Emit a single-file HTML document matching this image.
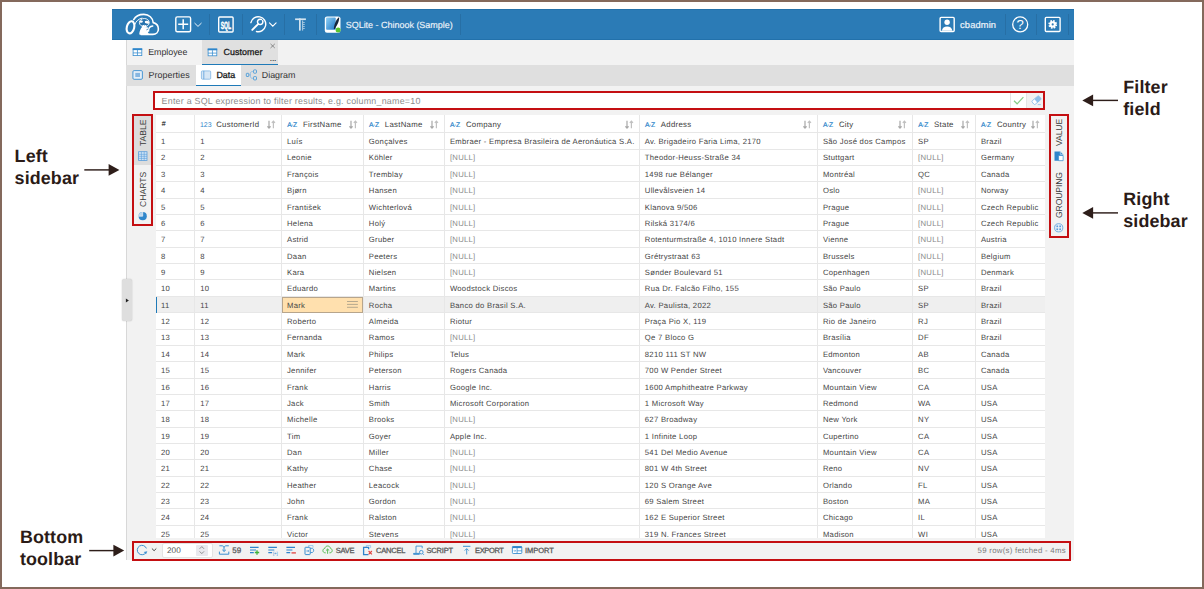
<!DOCTYPE html>
<html><head><meta charset="utf-8"><title>CloudBeaver Data Editor</title>
<style>
html,body{margin:0;padding:0;}
body{width:1204px;height:589px;position:relative;overflow:hidden;background:#fff;font-family:"Liberation Sans",sans-serif;font-size:7.7px;color:#333;text-rendering:geometricPrecision;}
div{box-sizing:border-box;}
svg{position:absolute;left:0;top:0;overflow:visible}
.t{position:absolute;white-space:nowrap;line-height:1;}
.frame{position:absolute;background:#84695c;}
.anno{position:absolute;font-weight:bold;font-size:17.9px;line-height:22px;color:#2b1b17;white-space:nowrap;letter-spacing:.12px}
.cell{position:absolute;white-space:nowrap;line-height:1;color:#454545;font-size:7.7px;letter-spacing:.28px}
.null{color:#888}
.hl{position:absolute;background:#e7e7e7;height:1px}
.vl{position:absolute;background:#e7e7e7;width:1px}
.hd{position:absolute;white-space:nowrap;line-height:1;color:#3c3c3c;font-size:7.8px;letter-spacing:.29px}
.ty{position:absolute;white-space:nowrap;line-height:1;color:#3b8fd0;font-size:7px;letter-spacing:-.2px}
.red{position:absolute;border:2px solid #c40f12;}
.tb{position:absolute;white-space:nowrap;line-height:1;color:#585858;font-size:7.5px;font-weight:normal;letter-spacing:-.18px;-webkit-text-stroke:.28px #585858}
.vt{position:absolute;white-space:nowrap;line-height:1;font-size:8.6px;color:#3a3a3a;transform-origin:0 0;transform:rotate(-90deg) translate(0,-50%)}
.sep{position:absolute;top:13.7px;width:1px;height:21px;background:rgba(0,0,0,.09)}
</style></head><body>

<div style="position:absolute;left:112px;top:8.8px;width:961.9px;height:31px;background:#2b7bb6;border-top:.7px solid #2271ab;border-bottom:.7px solid #2271ab"></div>
<div style="position:absolute;left:126.4px;top:39.8px;width:947.5px;height:520.6px;background:#f2f2f2;border-left:.7px solid #d8d8d8"></div>
<div class="sep" style="left:209.1px"></div>
<div class="sep" style="left:241.7px"></div>
<div class="sep" style="left:284.2px"></div>
<div class="sep" style="left:316.1px"></div>
<div class="sep" style="left:460.0px"></div>
<div class="sep" style="left:1004.6px"></div>
<div class="sep" style="left:1035.9px"></div>
<div class="sep" style="left:1068.0px"></div>
<div style="position:absolute;left:202.2px;top:39.8px;width:75.8px;height:25.3px;background:#e0e0e0;border-bottom:1.5px solid #1f7ab8"></div>
<div style="position:absolute;left:126.4px;top:65.1px;width:947.5px;height:20.9px;background:#dfdfdf"></div>
<div style="position:absolute;left:195.6px;top:65.1px;width:45.3px;height:20.9px;background:#fff;border-bottom:1.5px solid #1f7ab8"></div>
<div class="t" style="left:148.2px;top:47.9px;font-size:8.9px;color:#333;letter-spacing:-.04px">Employee</div>
<div class="t" style="left:223.4px;top:47.9px;font-size:8.9px;color:#1a1a1a;letter-spacing:.1px;-webkit-text-stroke:.3px #1a1a1a">Customer</div>
<div class="t" style="left:148.4px;top:70.5px;font-size:8.9px;color:#333;letter-spacing:.09px">Properties</div>
<div class="t" style="left:216.4px;top:70.5px;font-size:8.9px;color:#1a1a1a;-webkit-text-stroke:.3px #1a1a1a">Data</div>
<div class="t" style="left:261.8px;top:70.5px;font-size:8.9px;color:#333">Diagram</div>
<div class="t" style="left:270.1px;top:56.6px;font-size:6.6px;color:#333;letter-spacing:.25px;font-weight:bold">...</div>
<div style="position:absolute;left:154px;top:91px;width:890px;height:19px;background:#fff"></div>
<div style="position:absolute;left:1026.4px;top:91px;width:18px;height:19px;background:#f1f1f1"></div>
<div style="position:absolute;left:1009.8px;top:92px;width:1px;height:17px;background:#e4e4e4"></div>
<div style="position:absolute;left:1025.9px;top:92px;width:1px;height:17px;background:#e4e4e4"></div>
<div class="t" style="left:161.6px;top:96.7px;font-size:8.9px;color:#8c8c8c;letter-spacing:.236px">Enter a SQL expression to filter results, e.g. column_name=10</div>
<div style="position:absolute;left:155.5px;top:114.6px;width:889.9000000000001px;height:423.6px;background:#fff"></div>
<div style="position:absolute;left:155.5px;top:296.30px;width:889.9000000000001px;height:16.36px;background:#efefef"></div>
<div class="hl" style="left:155.5px;top:132.20px;width:889.9000000000001px"></div>
<div class="hl" style="left:155.5px;top:148.56px;width:889.9000000000001px"></div>
<div class="hl" style="left:155.5px;top:164.92px;width:889.9000000000001px"></div>
<div class="hl" style="left:155.5px;top:181.28px;width:889.9000000000001px"></div>
<div class="hl" style="left:155.5px;top:197.64px;width:889.9000000000001px"></div>
<div class="hl" style="left:155.5px;top:214.00px;width:889.9000000000001px"></div>
<div class="hl" style="left:155.5px;top:230.36px;width:889.9000000000001px"></div>
<div class="hl" style="left:155.5px;top:246.72px;width:889.9000000000001px"></div>
<div class="hl" style="left:155.5px;top:263.08px;width:889.9000000000001px"></div>
<div class="hl" style="left:155.5px;top:279.44px;width:889.9000000000001px"></div>
<div class="hl" style="left:155.5px;top:295.80px;width:889.9000000000001px"></div>
<div class="hl" style="left:155.5px;top:312.16px;width:889.9000000000001px"></div>
<div class="hl" style="left:155.5px;top:328.52px;width:889.9000000000001px"></div>
<div class="hl" style="left:155.5px;top:344.88px;width:889.9000000000001px"></div>
<div class="hl" style="left:155.5px;top:361.24px;width:889.9000000000001px"></div>
<div class="hl" style="left:155.5px;top:377.60px;width:889.9000000000001px"></div>
<div class="hl" style="left:155.5px;top:393.96px;width:889.9000000000001px"></div>
<div class="hl" style="left:155.5px;top:410.32px;width:889.9000000000001px"></div>
<div class="hl" style="left:155.5px;top:426.68px;width:889.9000000000001px"></div>
<div class="hl" style="left:155.5px;top:443.04px;width:889.9000000000001px"></div>
<div class="hl" style="left:155.5px;top:459.40px;width:889.9000000000001px"></div>
<div class="hl" style="left:155.5px;top:475.76px;width:889.9000000000001px"></div>
<div class="hl" style="left:155.5px;top:492.12px;width:889.9000000000001px"></div>
<div class="hl" style="left:155.5px;top:508.48px;width:889.9000000000001px"></div>
<div class="hl" style="left:155.5px;top:524.84px;width:889.9000000000001px"></div>
<div class="vl" style="left:194.20px;top:114.6px;height:423.6px"></div>
<div class="vl" style="left:281.00px;top:114.6px;height:423.6px"></div>
<div class="vl" style="left:362.80px;top:114.6px;height:423.6px"></div>
<div class="vl" style="left:443.90px;top:114.6px;height:423.6px"></div>
<div class="vl" style="left:638.80px;top:114.6px;height:423.6px"></div>
<div class="vl" style="left:816.90px;top:114.6px;height:423.6px"></div>
<div class="vl" style="left:912.10px;top:114.6px;height:423.6px"></div>
<div class="vl" style="left:974.90px;top:114.6px;height:423.6px"></div>
<div style="position:absolute;left:155.9px;top:296.70px;width:1.2px;height:15.959999999999999px;background:#1f7ab8"></div>
<div style="position:absolute;left:281.7px;top:296.70px;width:81.60000000000001px;height:16.16px;background:#ffe0ae;border:1px solid #b7a58c"></div>
<div class="hd" style="left:161.4px;top:120.3px;font-size:7.4px;font-style:italic;font-weight:bold;color:#444">#</div>
<div class="ty" style="left:199.89999999999998px;top:121.49999999999999px;letter-spacing:0;color:#2f86cb">123</div>
<div class="hd" style="left:216.2px;top:120.89999999999999px">CustomerId</div>
<svg style="left:266.9px;top:121.0px" width="9" height="8" viewBox="0 0 9 8"><path d="M2 -0.2v7.1M0.4 5.3l1.6 1.7 1.6-1.7" fill="none" stroke="#a8a8a8" stroke-width="1.2"/><path d="M6.4 7.2V0.2M4.8 1.9l1.6-1.7 1.6 1.7" fill="none" stroke="#c0c0c0" stroke-width="1.2"/></svg>
<div class="ty" style="left:287.2px;top:122.99999999999999px;font-size:6.8px;letter-spacing:-.45px;color:#2f86cb;-webkit-text-stroke:.2px #2f86cb">A·Z</div>
<div class="hd" style="left:303.0px;top:120.89999999999999px">FirstName</div>
<svg style="left:348.7px;top:121.0px" width="9" height="8" viewBox="0 0 9 8"><path d="M2 -0.2v7.1M0.4 5.3l1.6 1.7 1.6-1.7" fill="none" stroke="#a8a8a8" stroke-width="1.2"/><path d="M6.4 7.2V0.2M4.8 1.9l1.6-1.7 1.6 1.7" fill="none" stroke="#c0c0c0" stroke-width="1.2"/></svg>
<div class="ty" style="left:369.0px;top:122.99999999999999px;font-size:6.8px;letter-spacing:-.45px;color:#2f86cb;-webkit-text-stroke:.2px #2f86cb">A·Z</div>
<div class="hd" style="left:384.8px;top:120.89999999999999px">LastName</div>
<svg style="left:429.79999999999995px;top:121.0px" width="9" height="8" viewBox="0 0 9 8"><path d="M2 -0.2v7.1M0.4 5.3l1.6 1.7 1.6-1.7" fill="none" stroke="#a8a8a8" stroke-width="1.2"/><path d="M6.4 7.2V0.2M4.8 1.9l1.6-1.7 1.6 1.7" fill="none" stroke="#c0c0c0" stroke-width="1.2"/></svg>
<div class="ty" style="left:450.09999999999997px;top:122.99999999999999px;font-size:6.8px;letter-spacing:-.45px;color:#2f86cb;-webkit-text-stroke:.2px #2f86cb">A·Z</div>
<div class="hd" style="left:465.9px;top:120.89999999999999px">Company</div>
<svg style="left:624.6999999999999px;top:121.0px" width="9" height="8" viewBox="0 0 9 8"><path d="M2 -0.2v7.1M0.4 5.3l1.6 1.7 1.6-1.7" fill="none" stroke="#a8a8a8" stroke-width="1.2"/><path d="M6.4 7.2V0.2M4.8 1.9l1.6-1.7 1.6 1.7" fill="none" stroke="#c0c0c0" stroke-width="1.2"/></svg>
<div class="ty" style="left:645.0px;top:122.99999999999999px;font-size:6.8px;letter-spacing:-.45px;color:#2f86cb;-webkit-text-stroke:.2px #2f86cb">A·Z</div>
<div class="hd" style="left:660.8px;top:120.89999999999999px">Address</div>
<svg style="left:802.8px;top:121.0px" width="9" height="8" viewBox="0 0 9 8"><path d="M2 -0.2v7.1M0.4 5.3l1.6 1.7 1.6-1.7" fill="none" stroke="#a8a8a8" stroke-width="1.2"/><path d="M6.4 7.2V0.2M4.8 1.9l1.6-1.7 1.6 1.7" fill="none" stroke="#c0c0c0" stroke-width="1.2"/></svg>
<div class="ty" style="left:823.1px;top:122.99999999999999px;font-size:6.8px;letter-spacing:-.45px;color:#2f86cb;-webkit-text-stroke:.2px #2f86cb">A·Z</div>
<div class="hd" style="left:838.9px;top:120.89999999999999px">City</div>
<svg style="left:898.0px;top:121.0px" width="9" height="8" viewBox="0 0 9 8"><path d="M2 -0.2v7.1M0.4 5.3l1.6 1.7 1.6-1.7" fill="none" stroke="#a8a8a8" stroke-width="1.2"/><path d="M6.4 7.2V0.2M4.8 1.9l1.6-1.7 1.6 1.7" fill="none" stroke="#c0c0c0" stroke-width="1.2"/></svg>
<div class="ty" style="left:918.3000000000001px;top:122.99999999999999px;font-size:6.8px;letter-spacing:-.45px;color:#2f86cb;-webkit-text-stroke:.2px #2f86cb">A·Z</div>
<div class="hd" style="left:934.1px;top:120.89999999999999px">State</div>
<svg style="left:960.8px;top:121.0px" width="9" height="8" viewBox="0 0 9 8"><path d="M2 -0.2v7.1M0.4 5.3l1.6 1.7 1.6-1.7" fill="none" stroke="#a8a8a8" stroke-width="1.2"/><path d="M6.4 7.2V0.2M4.8 1.9l1.6-1.7 1.6 1.7" fill="none" stroke="#c0c0c0" stroke-width="1.2"/></svg>
<div class="ty" style="left:981.1px;top:122.99999999999999px;font-size:6.8px;letter-spacing:-.45px;color:#2f86cb;-webkit-text-stroke:.2px #2f86cb">A·Z</div>
<div class="hd" style="left:996.9px;top:120.89999999999999px">Country</div>
<svg style="left:1030.8000000000002px;top:121.0px" width="9" height="8" viewBox="0 0 9 8"><path d="M2 -0.2v7.1M0.4 5.3l1.6 1.7 1.6-1.7" fill="none" stroke="#a8a8a8" stroke-width="1.2"/><path d="M6.4 7.2V0.2M4.8 1.9l1.6-1.7 1.6 1.7" fill="none" stroke="#c0c0c0" stroke-width="1.2"/></svg>
<div class="cell" style="left:161.0px;top:138.10px">1</div>
<div class="cell" style="left:200.2px;top:138.10px">1</div>
<div class="cell" style="left:287.0px;top:138.10px">Luís</div>
<div class="cell" style="left:368.8px;top:138.10px">Gonçalves</div>
<div class="cell" style="left:449.9px;top:138.10px">Embraer - Empresa Brasileira de Aeronáutica S.A.</div>
<div class="cell" style="left:644.8px;top:138.10px">Av. Brigadeiro Faria Lima, 2170</div>
<div class="cell" style="left:822.9px;top:138.10px">São José dos Campos</div>
<div class="cell" style="left:918.1px;top:138.10px">SP</div>
<div class="cell" style="left:980.9px;top:138.10px">Brazil</div>
<div class="cell" style="left:161.0px;top:154.46px">2</div>
<div class="cell" style="left:200.2px;top:154.46px">2</div>
<div class="cell" style="left:287.0px;top:154.46px">Leonie</div>
<div class="cell" style="left:368.8px;top:154.46px">Köhler</div>
<div class="cell null" style="left:449.9px;top:154.46px">[NULL]</div>
<div class="cell" style="left:644.8px;top:154.46px">Theodor-Heuss-Straße 34</div>
<div class="cell" style="left:822.9px;top:154.46px">Stuttgart</div>
<div class="cell null" style="left:918.1px;top:154.46px">[NULL]</div>
<div class="cell" style="left:980.9px;top:154.46px">Germany</div>
<div class="cell" style="left:161.0px;top:170.82px">3</div>
<div class="cell" style="left:200.2px;top:170.82px">3</div>
<div class="cell" style="left:287.0px;top:170.82px">François</div>
<div class="cell" style="left:368.8px;top:170.82px">Tremblay</div>
<div class="cell null" style="left:449.9px;top:170.82px">[NULL]</div>
<div class="cell" style="left:644.8px;top:170.82px">1498 rue Bélanger</div>
<div class="cell" style="left:822.9px;top:170.82px">Montréal</div>
<div class="cell" style="left:918.1px;top:170.82px">QC</div>
<div class="cell" style="left:980.9px;top:170.82px">Canada</div>
<div class="cell" style="left:161.0px;top:187.18px">4</div>
<div class="cell" style="left:200.2px;top:187.18px">4</div>
<div class="cell" style="left:287.0px;top:187.18px">Bjørn</div>
<div class="cell" style="left:368.8px;top:187.18px">Hansen</div>
<div class="cell null" style="left:449.9px;top:187.18px">[NULL]</div>
<div class="cell" style="left:644.8px;top:187.18px">Ullevålsveien 14</div>
<div class="cell" style="left:822.9px;top:187.18px">Oslo</div>
<div class="cell null" style="left:918.1px;top:187.18px">[NULL]</div>
<div class="cell" style="left:980.9px;top:187.18px">Norway</div>
<div class="cell" style="left:161.0px;top:203.54px">5</div>
<div class="cell" style="left:200.2px;top:203.54px">5</div>
<div class="cell" style="left:287.0px;top:203.54px">František</div>
<div class="cell" style="left:368.8px;top:203.54px">Wichterlová</div>
<div class="cell null" style="left:449.9px;top:203.54px">[NULL]</div>
<div class="cell" style="left:644.8px;top:203.54px">Klanova 9/506</div>
<div class="cell" style="left:822.9px;top:203.54px">Prague</div>
<div class="cell null" style="left:918.1px;top:203.54px">[NULL]</div>
<div class="cell" style="left:980.9px;top:203.54px">Czech Republic</div>
<div class="cell" style="left:161.0px;top:219.90px">6</div>
<div class="cell" style="left:200.2px;top:219.90px">6</div>
<div class="cell" style="left:287.0px;top:219.90px">Helena</div>
<div class="cell" style="left:368.8px;top:219.90px">Holý</div>
<div class="cell null" style="left:449.9px;top:219.90px">[NULL]</div>
<div class="cell" style="left:644.8px;top:219.90px">Rilská 3174/6</div>
<div class="cell" style="left:822.9px;top:219.90px">Prague</div>
<div class="cell null" style="left:918.1px;top:219.90px">[NULL]</div>
<div class="cell" style="left:980.9px;top:219.90px">Czech Republic</div>
<div class="cell" style="left:161.0px;top:236.26px">7</div>
<div class="cell" style="left:200.2px;top:236.26px">7</div>
<div class="cell" style="left:287.0px;top:236.26px">Astrid</div>
<div class="cell" style="left:368.8px;top:236.26px">Gruber</div>
<div class="cell null" style="left:449.9px;top:236.26px">[NULL]</div>
<div class="cell" style="left:644.8px;top:236.26px">Rotenturmstraße 4, 1010 Innere Stadt</div>
<div class="cell" style="left:822.9px;top:236.26px">Vienne</div>
<div class="cell null" style="left:918.1px;top:236.26px">[NULL]</div>
<div class="cell" style="left:980.9px;top:236.26px">Austria</div>
<div class="cell" style="left:161.0px;top:252.62px">8</div>
<div class="cell" style="left:200.2px;top:252.62px">8</div>
<div class="cell" style="left:287.0px;top:252.62px">Daan</div>
<div class="cell" style="left:368.8px;top:252.62px">Peeters</div>
<div class="cell null" style="left:449.9px;top:252.62px">[NULL]</div>
<div class="cell" style="left:644.8px;top:252.62px">Grétrystraat 63</div>
<div class="cell" style="left:822.9px;top:252.62px">Brussels</div>
<div class="cell null" style="left:918.1px;top:252.62px">[NULL]</div>
<div class="cell" style="left:980.9px;top:252.62px">Belgium</div>
<div class="cell" style="left:161.0px;top:268.98px">9</div>
<div class="cell" style="left:200.2px;top:268.98px">9</div>
<div class="cell" style="left:287.0px;top:268.98px">Kara</div>
<div class="cell" style="left:368.8px;top:268.98px">Nielsen</div>
<div class="cell null" style="left:449.9px;top:268.98px">[NULL]</div>
<div class="cell" style="left:644.8px;top:268.98px">Sønder Boulevard 51</div>
<div class="cell" style="left:822.9px;top:268.98px">Copenhagen</div>
<div class="cell null" style="left:918.1px;top:268.98px">[NULL]</div>
<div class="cell" style="left:980.9px;top:268.98px">Denmark</div>
<div class="cell" style="left:161.0px;top:285.34px">10</div>
<div class="cell" style="left:200.2px;top:285.34px">10</div>
<div class="cell" style="left:287.0px;top:285.34px">Eduardo</div>
<div class="cell" style="left:368.8px;top:285.34px">Martins</div>
<div class="cell" style="left:449.9px;top:285.34px">Woodstock Discos</div>
<div class="cell" style="left:644.8px;top:285.34px">Rua Dr. Falcão Filho, 155</div>
<div class="cell" style="left:822.9px;top:285.34px">São Paulo</div>
<div class="cell" style="left:918.1px;top:285.34px">SP</div>
<div class="cell" style="left:980.9px;top:285.34px">Brazil</div>
<div class="cell" style="left:161.0px;top:301.70px">11</div>
<div class="cell" style="left:200.2px;top:301.70px">11</div>
<div class="cell" style="left:287.0px;top:301.70px">Mark</div>
<div class="cell" style="left:368.8px;top:301.70px">Rocha</div>
<div class="cell" style="left:449.9px;top:301.70px">Banco do Brasil S.A.</div>
<div class="cell" style="left:644.8px;top:301.70px">Av. Paulista, 2022</div>
<div class="cell" style="left:822.9px;top:301.70px">São Paulo</div>
<div class="cell" style="left:918.1px;top:301.70px">SP</div>
<div class="cell" style="left:980.9px;top:301.70px">Brazil</div>
<div class="cell" style="left:161.0px;top:318.06px">12</div>
<div class="cell" style="left:200.2px;top:318.06px">12</div>
<div class="cell" style="left:287.0px;top:318.06px">Roberto</div>
<div class="cell" style="left:368.8px;top:318.06px">Almeida</div>
<div class="cell" style="left:449.9px;top:318.06px">Riotur</div>
<div class="cell" style="left:644.8px;top:318.06px">Praça Pio X, 119</div>
<div class="cell" style="left:822.9px;top:318.06px">Rio de Janeiro</div>
<div class="cell" style="left:918.1px;top:318.06px">RJ</div>
<div class="cell" style="left:980.9px;top:318.06px">Brazil</div>
<div class="cell" style="left:161.0px;top:334.42px">13</div>
<div class="cell" style="left:200.2px;top:334.42px">13</div>
<div class="cell" style="left:287.0px;top:334.42px">Fernanda</div>
<div class="cell" style="left:368.8px;top:334.42px">Ramos</div>
<div class="cell null" style="left:449.9px;top:334.42px">[NULL]</div>
<div class="cell" style="left:644.8px;top:334.42px">Qe 7 Bloco G</div>
<div class="cell" style="left:822.9px;top:334.42px">Brasília</div>
<div class="cell" style="left:918.1px;top:334.42px">DF</div>
<div class="cell" style="left:980.9px;top:334.42px">Brazil</div>
<div class="cell" style="left:161.0px;top:350.78px">14</div>
<div class="cell" style="left:200.2px;top:350.78px">14</div>
<div class="cell" style="left:287.0px;top:350.78px">Mark</div>
<div class="cell" style="left:368.8px;top:350.78px">Philips</div>
<div class="cell" style="left:449.9px;top:350.78px">Telus</div>
<div class="cell" style="left:644.8px;top:350.78px">8210 111 ST NW</div>
<div class="cell" style="left:822.9px;top:350.78px">Edmonton</div>
<div class="cell" style="left:918.1px;top:350.78px">AB</div>
<div class="cell" style="left:980.9px;top:350.78px">Canada</div>
<div class="cell" style="left:161.0px;top:367.14px">15</div>
<div class="cell" style="left:200.2px;top:367.14px">15</div>
<div class="cell" style="left:287.0px;top:367.14px">Jennifer</div>
<div class="cell" style="left:368.8px;top:367.14px">Peterson</div>
<div class="cell" style="left:449.9px;top:367.14px">Rogers Canada</div>
<div class="cell" style="left:644.8px;top:367.14px">700 W Pender Street</div>
<div class="cell" style="left:822.9px;top:367.14px">Vancouver</div>
<div class="cell" style="left:918.1px;top:367.14px">BC</div>
<div class="cell" style="left:980.9px;top:367.14px">Canada</div>
<div class="cell" style="left:161.0px;top:383.50px">16</div>
<div class="cell" style="left:200.2px;top:383.50px">16</div>
<div class="cell" style="left:287.0px;top:383.50px">Frank</div>
<div class="cell" style="left:368.8px;top:383.50px">Harris</div>
<div class="cell" style="left:449.9px;top:383.50px">Google Inc.</div>
<div class="cell" style="left:644.8px;top:383.50px">1600 Amphitheatre Parkway</div>
<div class="cell" style="left:822.9px;top:383.50px">Mountain View</div>
<div class="cell" style="left:918.1px;top:383.50px">CA</div>
<div class="cell" style="left:980.9px;top:383.50px">USA</div>
<div class="cell" style="left:161.0px;top:399.86px">17</div>
<div class="cell" style="left:200.2px;top:399.86px">17</div>
<div class="cell" style="left:287.0px;top:399.86px">Jack</div>
<div class="cell" style="left:368.8px;top:399.86px">Smith</div>
<div class="cell" style="left:449.9px;top:399.86px">Microsoft Corporation</div>
<div class="cell" style="left:644.8px;top:399.86px">1 Microsoft Way</div>
<div class="cell" style="left:822.9px;top:399.86px">Redmond</div>
<div class="cell" style="left:918.1px;top:399.86px">WA</div>
<div class="cell" style="left:980.9px;top:399.86px">USA</div>
<div class="cell" style="left:161.0px;top:416.22px">18</div>
<div class="cell" style="left:200.2px;top:416.22px">18</div>
<div class="cell" style="left:287.0px;top:416.22px">Michelle</div>
<div class="cell" style="left:368.8px;top:416.22px">Brooks</div>
<div class="cell null" style="left:449.9px;top:416.22px">[NULL]</div>
<div class="cell" style="left:644.8px;top:416.22px">627 Broadway</div>
<div class="cell" style="left:822.9px;top:416.22px">New York</div>
<div class="cell" style="left:918.1px;top:416.22px">NY</div>
<div class="cell" style="left:980.9px;top:416.22px">USA</div>
<div class="cell" style="left:161.0px;top:432.58px">19</div>
<div class="cell" style="left:200.2px;top:432.58px">19</div>
<div class="cell" style="left:287.0px;top:432.58px">Tim</div>
<div class="cell" style="left:368.8px;top:432.58px">Goyer</div>
<div class="cell" style="left:449.9px;top:432.58px">Apple Inc.</div>
<div class="cell" style="left:644.8px;top:432.58px">1 Infinite Loop</div>
<div class="cell" style="left:822.9px;top:432.58px">Cupertino</div>
<div class="cell" style="left:918.1px;top:432.58px">CA</div>
<div class="cell" style="left:980.9px;top:432.58px">USA</div>
<div class="cell" style="left:161.0px;top:448.94px">20</div>
<div class="cell" style="left:200.2px;top:448.94px">20</div>
<div class="cell" style="left:287.0px;top:448.94px">Dan</div>
<div class="cell" style="left:368.8px;top:448.94px">Miller</div>
<div class="cell null" style="left:449.9px;top:448.94px">[NULL]</div>
<div class="cell" style="left:644.8px;top:448.94px">541 Del Medio Avenue</div>
<div class="cell" style="left:822.9px;top:448.94px">Mountain View</div>
<div class="cell" style="left:918.1px;top:448.94px">CA</div>
<div class="cell" style="left:980.9px;top:448.94px">USA</div>
<div class="cell" style="left:161.0px;top:465.30px">21</div>
<div class="cell" style="left:200.2px;top:465.30px">21</div>
<div class="cell" style="left:287.0px;top:465.30px">Kathy</div>
<div class="cell" style="left:368.8px;top:465.30px">Chase</div>
<div class="cell null" style="left:449.9px;top:465.30px">[NULL]</div>
<div class="cell" style="left:644.8px;top:465.30px">801 W 4th Street</div>
<div class="cell" style="left:822.9px;top:465.30px">Reno</div>
<div class="cell" style="left:918.1px;top:465.30px">NV</div>
<div class="cell" style="left:980.9px;top:465.30px">USA</div>
<div class="cell" style="left:161.0px;top:481.66px">22</div>
<div class="cell" style="left:200.2px;top:481.66px">22</div>
<div class="cell" style="left:287.0px;top:481.66px">Heather</div>
<div class="cell" style="left:368.8px;top:481.66px">Leacock</div>
<div class="cell null" style="left:449.9px;top:481.66px">[NULL]</div>
<div class="cell" style="left:644.8px;top:481.66px">120 S Orange Ave</div>
<div class="cell" style="left:822.9px;top:481.66px">Orlando</div>
<div class="cell" style="left:918.1px;top:481.66px">FL</div>
<div class="cell" style="left:980.9px;top:481.66px">USA</div>
<div class="cell" style="left:161.0px;top:498.02px">23</div>
<div class="cell" style="left:200.2px;top:498.02px">23</div>
<div class="cell" style="left:287.0px;top:498.02px">John</div>
<div class="cell" style="left:368.8px;top:498.02px">Gordon</div>
<div class="cell null" style="left:449.9px;top:498.02px">[NULL]</div>
<div class="cell" style="left:644.8px;top:498.02px">69 Salem Street</div>
<div class="cell" style="left:822.9px;top:498.02px">Boston</div>
<div class="cell" style="left:918.1px;top:498.02px">MA</div>
<div class="cell" style="left:980.9px;top:498.02px">USA</div>
<div class="cell" style="left:161.0px;top:514.38px">24</div>
<div class="cell" style="left:200.2px;top:514.38px">24</div>
<div class="cell" style="left:287.0px;top:514.38px">Frank</div>
<div class="cell" style="left:368.8px;top:514.38px">Ralston</div>
<div class="cell null" style="left:449.9px;top:514.38px">[NULL]</div>
<div class="cell" style="left:644.8px;top:514.38px">162 E Superior Street</div>
<div class="cell" style="left:822.9px;top:514.38px">Chicago</div>
<div class="cell" style="left:918.1px;top:514.38px">IL</div>
<div class="cell" style="left:980.9px;top:514.38px">USA</div>
<div class="cell" style="left:161.0px;top:530.74px">25</div>
<div class="cell" style="left:200.2px;top:530.74px">25</div>
<div class="cell" style="left:287.0px;top:530.74px">Victor</div>
<div class="cell" style="left:368.8px;top:530.74px">Stevens</div>
<div class="cell null" style="left:449.9px;top:530.74px">[NULL]</div>
<div class="cell" style="left:644.8px;top:530.74px">319 N. Frances Street</div>
<div class="cell" style="left:822.9px;top:530.74px">Madison</div>
<div class="cell" style="left:918.1px;top:530.74px">WI</div>
<div class="cell" style="left:980.9px;top:530.74px">USA</div>
<svg style="left:347px;top:301.20px" width="11" height="7" viewBox="0 0 11 7"><path d="M0 .5h10.9M0 3.4h10.9M0 6.3h10.9" stroke="#a39a86" stroke-width="0.8" fill="none"/></svg>
<div style="position:absolute;left:162.3px;top:542.6px;width:50.4px;height:15px;background:#fff;border:1px solid #e3e3e3;border-radius:2px"></div>
<div style="position:absolute;left:195.9px;top:544.5px;width:11.8px;height:11.2px;background:#e9e9ee;border-radius:1px"></div>
<div class="t" style="left:166.9px;top:546.5px;font-size:8.2px;color:#555;letter-spacing:.1px">200</div>
<div class="tb" style="left:232.3px;top:546.6px;font-size:8px;font-weight:normal;letter-spacing:-.1px;color:#555;-webkit-text-stroke:.25px #555">59</div>
<div class="tb" style="left:335.7px;top:546.9px">SAVE</div>
<div class="tb" style="left:375.9px;top:546.9px">CANCEL</div>
<div class="tb" style="left:426.5px;top:546.9px">SCRIPT</div>
<div class="tb" style="left:475px;top:546.9px;letter-spacing:-.36px">EXPORT</div>
<div class="tb" style="left:525.1px;top:546.9px;letter-spacing:-.06px">IMPORT</div>
<div class="t" style="left:977.6px;top:546.9px;font-size:7.8px;color:#7a7a7a;letter-spacing:.28px">59 row(s) fetched - 4ms</div>
<div style="position:absolute;left:133px;top:114.5px;width:19.5px;height:50.3px;background:#dcdcdc"></div>
<div class="vt" style="left:143.1px;top:146.1px">TABLE</div>
<div class="vt" style="left:143.1px;top:206.6px">CHARTS</div>
<div class="vt" style="left:1058.9px;top:146.2px;letter-spacing:-.1px">VALUE</div>
<div class="vt" style="left:1058.9px;top:217.7px;letter-spacing:-.12px">GROUPING</div>
<div style="position:absolute;left:122px;top:279.4px;width:10.4px;height:41.5px;background:#dedede;border-radius:2.5px;box-shadow:0 0 1.5px rgba(0,0,0,.25)"></div>
<svg width="1204" height="589" viewBox="0 0 1204 589" font-family="Liberation Sans, sans-serif">
<!-- logo: cloud + beaver -->
<g fill="none" stroke="#fff" stroke-width="1.600" stroke-linejoin="round" stroke-linecap="round">
<ellipse cx="130.500" cy="27.300" rx="3.700" ry="6.200" transform="rotate(14 130.500 27.300)" stroke-width="2.100"/>
<path d="M133.700 19.600C135.300 16.500 139 14.400 143.900 14.400c5.200 0 8.900 3.600 9.300 8.200 3.200.8 5.200 3.400 5.200 6.400 0 3.200-2.400 5.400-5.500 5.400H141"/>
<path d="M148.600 31.200c-.2-3 1.600-5 4.200-5.200" stroke-width="1.300"/>
<path d="M134.800 24.500c1-3 3.400-5.600 7.200-6.400" stroke-width="1"/>
</g>
<path d="M139.200 34.600c.3-3.600 1.500-6 2.900-7.600l5.600.3c.9 1.500.7 3.400.2 5l1.300 2.300z" fill="#fff"/>
<ellipse cx="144.300" cy="22.600" rx="4.900" ry="4.100" fill="#2773ae" stroke="#fff" stroke-width=".9"/>
<ellipse cx="141.200" cy="21.600" rx="1.700" ry="1.100" fill="#fff" transform="rotate(-12 141.200 21.600)"/>
<ellipse cx="147" cy="22.200" rx="2.300" ry="1.400" fill="#fff" transform="rotate(12 147 22.200)"/>
<ellipse cx="144.300" cy="26.300" rx="2.300" ry="1.500" fill="#fff"/>
<path d="M143.500 24.600h1.800l-.9 1.100z" fill="#2773ae"/>
<path d="M146.400 29.900l1.800-.9" stroke="#2773ae" stroke-width=".8" fill="none"/>

<!-- new connection (plus) -->
<rect x="175.800" y="16.900" width="14.800" height="14.800" rx="1.500" fill="#2e80bb" stroke="#fff" stroke-width="1.400"/>
<path d="M183.200 19.300v10M178.200 24.300h10" stroke="#fff" stroke-width="1.500" fill="none"/>
<path d="M194.500 23l3.500 3.400 3.500-3.400" stroke="#fff" stroke-width="1" fill="none" opacity=".9"/>

<!-- SQL -->
<rect x="218.700" y="17" width="14.400" height="15" rx="1" fill="#2a78b3" stroke="#fff" stroke-width="1.400"/>
<text x="0" y="0" transform="translate(220.700 28.600) scale(.49 1)" font-size="10.400" font-weight="bold" fill="#fff" stroke="#fff" stroke-width=".5">SQL</text>

<!-- tools (wrench in circle) -->
<g fill="none" stroke="#fff" stroke-width="1.400" stroke-linecap="round">
<path d="M250.900 22.600a7.500 7.500 0 1 1 5.600 8.900"/>
<path d="M252.300 29.900l5.800-5.800" stroke-width="1.900"/>
<path d="M262.600 20.670A2.700 2.700 0 1 1 261.430 19.490" stroke-width="1.500"/>
<path d="M269.500 22.900l3.300 3.300 3.300-3.300" stroke-width="1.100"/>
</g>

<!-- T ruler -->
<g opacity=".8" fill="#fff">
<rect x="295.100" y="18.400" width="10.800" height="1.700"/>
<rect x="299" y="18.400" width="1.700" height="12.200"/>
<rect x="302.300" y="20.500" width=".8" height="10.100"/>
<rect x="303.100" y="22" width="1.600" height=".7"/><rect x="303.100" y="24" width="1.600" height=".7"/><rect x="303.100" y="26" width="1.600" height=".7"/><rect x="303.100" y="28" width="1.600" height=".7"/>
</g>

<!-- sqlite icon -->
<defs><linearGradient id="sqg" x1="0" y1="0" x2="1" y2="1"><stop offset="0" stop-color="#8fd0f5"/><stop offset="1" stop-color="#1f78c8"/></linearGradient></defs>
<rect x="324.800" y="16.400" width="15.700" height="16.400" rx="2.200" fill="#fff"/>
<rect x="326.100" y="17.500" width="9.600" height="12.300" rx=".8" fill="url(#sqg)"/>
<path d="M339.200 17.300c-2.400 1.200-4.600 5.400-5.400 11.600l.9.200c1.200-1.900 4.700-6.800 4.500-11.800z" fill="#16273d"/>
<circle cx="338.100" cy="30" r="2.500" fill="#5ac42e"/>

<!-- user -->
<rect x="940.100" y="17.400" width="14.100" height="14.100" rx="1" fill="none" stroke="#fff" stroke-width="1.400"/>
<circle cx="947.100" cy="22.300" r="2.700" fill="#fff"/>
<path d="M941.900 30.800c.2-3 2.400-4.400 5.200-4.400s5 1.400 5.200 4.400z" fill="#fff"/>
<!-- help -->
<circle cx="1020.200" cy="24.400" r="7.500" fill="none" stroke="#fff" stroke-width="1.300"/>
<text x="1016.500" y="29.100" font-size="13" fill="#fff">?</text>
<!-- settings -->
<rect x="1045.300" y="17.400" width="14.800" height="14.100" rx="1" fill="none" stroke="#fff" stroke-width="1.400"/>
<circle cx="1052.700" cy="24.400" r="3.300" fill="none" stroke="#fff" stroke-width="2.200" stroke-dasharray="1.500 1.092"/>
<circle cx="1052.700" cy="24.400" r="3.200" fill="#fff"/>
<circle cx="1052.700" cy="24.400" r="1.050" fill="#2b7bb6"/>

<!-- tab table icons -->
<g id="tblico">
<rect x="133.100" y="48.800" width="8.700" height="6.800" fill="#fff" stroke="#3b8fd0" stroke-width=".8"/>
<rect x="132.700" y="48.400" width="9.500" height="1.700" fill="#2f86cb"/>
<path d="M137.450 50v5.600M133 52.900h8.800" stroke="#3b8fd0" stroke-width=".8"/>
</g>
<use href="#tblico" x="75" y=".2"/>
<!-- close x -->
<path d="M270.500 43.900l4.300 4.100M274.800 43.900l-4.300 4.100" stroke="#666" stroke-width=".7" fill="none"/>
<!-- properties icon -->
<rect x="132.900" y="70.600" width="9.500" height="8.700" rx="1.200" fill="#e4eef8" stroke="#3b8fd0" stroke-width=".9"/>
<rect x="135.300" y="72.900" width="4.700" height="4.100" fill="#6ea8db" opacity=".8"/>
<!-- data icon -->
<rect x="201.400" y="70.900" width="9.300" height="8.300" rx="1" fill="#d6e6f5" stroke="#7fb4e2" stroke-width=".8"/>
<path d="M203.800 70.900v8.300" stroke="#5a9edb" stroke-width=".8"/>
<!-- diagram icon -->
<g fill="none" stroke="#4a9bd8" stroke-width=".9">
<rect x="246.300" y="73.300" width="2.500" height="3.200" rx=".5"/>
<rect x="253.500" y="69.900" width="3" height="3.300" rx=".7"/>
<rect x="253.500" y="76.600" width="3" height="3.300" rx=".7"/>
<path d="M248.800 74.900h1.400M253.500 71.500h-1.200c-1.200 0-1.900.8-1.900 2v2.800c0 1.200.7 2 1.900 2h1.200" stroke="#7db6e4" stroke-width=".8"/>
</g>

<!-- filter icons -->
<path d="M1014 100.800l3.100 3 6.300-6.600" stroke="#86cc86" stroke-width="1.200" fill="none"/>
<g transform="rotate(-40 1036.400 100.300)">
<rect x="1032" y="98" width="9" height="4.600" rx="1" fill="#fff" stroke="#8fbfe8" stroke-width=".9"/>
<rect x="1035.600" y="98" width="5.400" height="4.600" rx="1" fill="#8fbfe8"/>
</g>
<path d="M1037.800 104.600h3" stroke="#8fbfe8" stroke-width=".8"/>

<!-- left sidebar icons -->
<rect x="138.600" y="151.700" width="8.400" height="8.900" fill="#cfe3f5" stroke="#5a9edb" stroke-width=".8"/>
<path d="M138.600 154.300h8.400M138.600 156.300h8.400M138.600 158.400h8.400M141.400 151.700v8.900M144.200 151.700v8.900" stroke="#5a9edb" stroke-width=".6"/>
<circle cx="142.700" cy="216.200" r="4.100" fill="#2f86cb"/>
<path d="M142.700 216.200v-4.100a4.100 4.100 0 0 0-4.100 4.100z" fill="#b9d7f0"/>
<path d="M142.700 216.200V211.700M142.700 216.200H138.200" stroke="#f2f2f2" stroke-width=".7"/>
<!-- right sidebar icons -->
<path d="M1054.500 151.600h5.800l2.800 2.800v6.300h-8.600z" fill="#2f86cb"/>
<path d="M1058.600 155.500h4.500v5.200h-4.500z" fill="#fff" stroke="#2f86cb" stroke-width=".6"/>
<path d="M1060.300 151.600v2.800h2.800" fill="none" stroke="#cfe3f5" stroke-width=".7"/>
<circle cx="1058.700" cy="227.800" r="4.100" fill="#eaf2fa" stroke="#5a9edb" stroke-width=".8"/>
<g fill="#5a9edb"><rect x="1056.400" y="225.500" width="1.700" height="1.700"/><rect x="1059.300" y="225.500" width="1.700" height="1.700"/><rect x="1056.400" y="228.400" width="1.700" height="1.700"/><rect x="1059.300" y="228.400" width="1.700" height="1.700"/></g>
<!-- collapse arrow -->
<path d="M125.900 298.500l3 2-3 2z" fill="#222"/>

<!-- bottom toolbar icons -->
<g fill="none" stroke="#3b8fd0" stroke-width="1">
<path d="M145.800 552.800a4.700 4.700 0 1 1 .6-4.400"/>
</g>
<path d="M147.300 551.200l-1.300 3-2.300-2.300z" fill="#3b8fd0"/>
<path d="M151.900 548.500l2.200 2.200 2.200-2.200" stroke="#444" stroke-width="1" fill="none"/>
<path d="M199.600 548.800l2.200-2.200 2.200 2.200M199.600 551.400l2.200 2.200 2.200-2.200" stroke="#777" stroke-width=".8" fill="none"/>
<!-- fetch size icon -->
<g fill="none" stroke="#3b8fd0" stroke-width="1">
<path d="M219.400 545.800h2.800c1 0 1.800.8 1.800 1.800v3.600M228.800 545.800H226c-1 0-1.900.8-1.900 1.800"/>
<path d="M222.300 549.800l1.800 1.700 1.800-1.700"/>
<path d="M219.400 551.600v2.600h9.400v-2.600"/>
</g>
<!-- add row -->
<g id="rowlines" stroke="#2f83cb" stroke-width="1.200" fill="none"><path d="M250 547.300h8.600M250 550h6M250 552.700h3.800"/></g>
<path d="M257 550.300v4.400M254.800 552.500h4.400" stroke="#3fb23c" stroke-width="1.300" fill="none"/>
<!-- duplicate row -->
<use href="#rowlines" x="18.300"/>
<text x="273" y="555.400" font-size="4.600" fill="#3b8fd0" letter-spacing="-.2">[+]</text>
<!-- delete row -->
<use href="#rowlines" x="36.400"/>
<path d="M291.500 552.900h4.400" stroke="#e0433f" stroke-width="1.300" fill="none"/>
<!-- copy -->
<g fill="none" stroke="#3b8fd0" stroke-width=".9">
<path d="M308.500 547v-1.500h4.500v2.200" stroke="#9cc5ea"/>
<rect x="305" y="547.300" width="5.200" height="7.300" rx=".6" fill="#f2f2f2" stroke-width="1"/>
<path d="M310.200 548.300h2.200c1.600.6 1.800 3.300 0 4.200h-2" />
<path d="M306.300 551h2.400M307.800 550l1 1-1 1" stroke-width=".7"/>
</g>
<!-- save (cloud upload) -->
<g fill="none" stroke="#4cb748" stroke-width=".9" stroke-linejoin="round">
<path d="M325.800 552.800h-.6c-1.400 0-2.300-1-2.300-2.200 0-1.100.8-2 1.900-2.200.4-1.600 1.500-2.400 2.800-2.400 1.500 0 2.600 1 2.900 2.400 1 .2 1.700 1.100 1.700 2.200 0 1.200-.9 2.200-2.200 2.200h-.6"/>
<path d="M327.600 553.800v-4.600M325.900 550.700l1.700-1.700 1.700 1.700"/>
</g>
<!-- cancel -->
<g fill="none" stroke="#3b8fd0" stroke-width=".9">
<path d="M366.300 547v-1.500h4.300v2.400" stroke="#9cc5ea"/>
<path d="M368.400 554.600h-4.800v-7.300h5v2" stroke-width="1.300" stroke="#2f83cb"/>
</g>
<path d="M368.600 551l3.300 3.300M371.900 551l-3.300 3.300" stroke="#e0433f" stroke-width="1.100" fill="none"/>
<!-- script -->
<g fill="none" stroke="#3b8fd0" stroke-width=".9">
<path d="M416 553.300v-7.200h6.200v2.200" />
<path d="M413.600 553.400h5.800v.9h-5.800z" fill="#3b8fd0"/>
<circle cx="421.300" cy="552.200" r="1.800"/>
<path d="M422.600 553.500l1.300 1.300"/>
</g>
<!-- export -->
<path d="M463 546.300h7.400" stroke="#3b8fd0" stroke-width="1" fill="none"/>
<path d="M466.700 554.400v-5.600M464.700 550.600l2-2 2 2" stroke="#3b8fd0" stroke-width=".9" fill="none"/>
<!-- import -->
<rect x="512.400" y="546.500" width="9.400" height="7" rx=".8" fill="#fff" stroke="#3b8fd0" stroke-width=".9"/>
<rect x="512.400" y="546.300" width="9.400" height="1.800" fill="#2f86cb"/>
<path d="M517.100 548v5.500M517.100 550.800h4.700" stroke="#3b8fd0" stroke-width=".8" fill="none"/>
<path d="M513.600 550.800h2M514.800 549.900l.9.900-.9.900" stroke="#3b8fd0" stroke-width=".6" fill="none"/>
</svg>

<div class="red" style="left:153.3px;top:90.5px;width:891.8px;height:19.9px"></div>
<div class="red" style="left:131.8px;top:113.7px;width:21.4px;height:112.7px"></div>
<div class="red" style="left:1048.6px;top:113.7px;width:20.8px;height:124.3px"></div>
<div class="red" style="left:131.7px;top:540.6px;width:939px;height:20.2px"></div>
<div class="t" style="left:345.7px;top:20.6px;font-size:9px;color:#eef4fa;letter-spacing:-.02px;-webkit-text-stroke:.15px #eef4fa">SQLite - Chinook (Sample)</div>
<div class="t" style="left:960.1px;top:20.5px;font-size:9.3px;color:#eef4fa;letter-spacing:.13px;-webkit-text-stroke:.2px #eef4fa">cbadmin</div>
<div class="anno" style="left:14.6px;top:145.3px">Left<br>sidebar</div>
<div class="anno" style="left:1123.3px;top:76.1px">Filter<br>field</div>
<div class="anno" style="left:1123.3px;top:187.6px">Right<br>sidebar</div>
<div class="anno" style="left:19.9px;top:526.1px">Bottom<br>toolbar</div>
<svg width="1204" height="589" viewBox="0 0 1204 589"><path d="M84.3 169.9H111.4" stroke="#2e1e1a" stroke-width="1.45" fill="none"/><path d="M119.4 169.9L108.60000000000001 164.1V175.70000000000002Z" fill="#2e1e1a"/><path d="M89.2 550.6H116.2" stroke="#2e1e1a" stroke-width="1.45" fill="none"/><path d="M124.2 550.6L113.4 544.8000000000001V556.4Z" fill="#2e1e1a"/><path d="M1090.3 100.4H1118" stroke="#2e1e1a" stroke-width="1.45" fill="none"/><path d="M1082.3 100.4L1093.1 94.60000000000001V106.2Z" fill="#2e1e1a"/><path d="M1090.3 212.9H1118" stroke="#2e1e1a" stroke-width="1.45" fill="none"/><path d="M1082.3 212.9L1093.1 207.1V218.70000000000002Z" fill="#2e1e1a"/></svg>
<div class="frame" style="left:0;top:0;width:1204px;height:2px"></div>
<div class="frame" style="left:0;top:0;width:2px;height:589px"></div>
<div class="frame" style="left:1201.6px;top:0;width:2.4px;height:589px"></div>
<div class="frame" style="left:0;top:586.7px;width:1204px;height:2.3px"></div>
</body></html>
